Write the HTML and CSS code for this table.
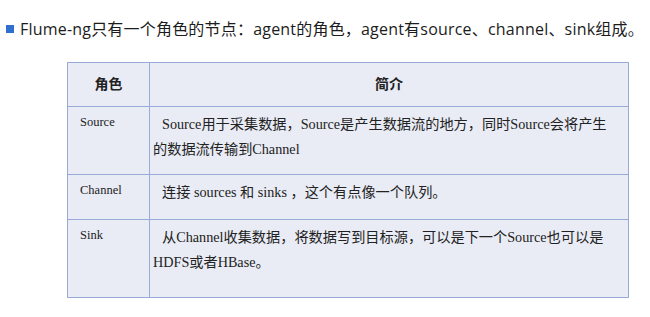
FILE: index.html
```html
<!DOCTYPE html>
<html lang="zh-CN">
<head>
<meta charset="utf-8">
<title>Flume-ng</title>
<link rel="stylesheet" href="styles.css">
</head>
<body>
<div class="page">
  <p class="lead"><span class="bullet"></span>Flume-ng只有一个角色的节点：agent的角色，agent有source、channel、sink组成。</p>
  <table class="roles">
    <thead>
      <tr class="head-row">
        <th class="col-role">角色</th>
        <th class="col-desc">简介</th>
      </tr>
    </thead>
    <tbody>
      <tr class="row-source">
        <td class="name">Source</td>
        <td class="desc"><span class="indent"></span>Source用于采集数据，Source是产生数据流的地方，同时Source会将产生<br>的数据流传输到Channel</td>
      </tr>
      <tr class="row-channel">
        <td class="name">Channel</td>
        <td class="desc"><span class="indent"></span>连接 sources 和 sinks ，这个有点像一个队列。</td>
      </tr>
      <tr class="row-sink">
        <td class="name">Sink</td>
        <td class="desc"><span class="indent"></span>从Channel收集数据，将数据写到目标源，可以是下一个Source也可以是<br>HDFS或者HBase。</td>
      </tr>
    </tbody>
  </table>
</div>
</body>
</html>
```

FILE: styles.css
```css
html, body {
  margin: 0;
  padding: 0;
  background: #ffffff;
}

.page {
  width: 650px;
  height: 317px;
  padding-top: 18px;
  box-sizing: border-box;
}

.lead {
  margin: 0;
  display: flex;
  align-items: center;
  padding-left: 6px;
  font-family: "Open Sans", "Noto Sans CJK SC", sans-serif;
  font-size: 16px;
  line-height: 22px;
  color: #1c1c1c;
  letter-spacing: 0.2px;
}

.bullet {
  width: 8px;
  height: 8px;
  background: #2f6fd0;
  margin-right: 6px;
  flex: none;
}

.roles {
  margin: 22px 0 0 67px;
  width: 562px;
  border-collapse: collapse;
  background: #e9ecf5;
  font-family: "Liberation Serif", "Noto Sans CJK SC", serif;
  color: #222222;
  table-layout: fixed;
}

.roles th,
.roles td {
  border: 1.5px solid #98aad8;
  padding: 0;
}

.roles .col-role { width: 81px; }

.roles .head-row th {
  height: 40px;
  font-family: "Noto Sans CJK SC", sans-serif;
  font-size: 14px;
  font-weight: bold;
  text-align: center;
  vertical-align: middle;
  padding-bottom: 3px;
}

.roles .name {
  vertical-align: top;
  font-size: 12.5px;
  line-height: 24px;
  padding-left: 12px;
  padding-top: 3px;
}

.roles .desc {
  vertical-align: top;
  font-size: 14.2px;
  line-height: 25px;
  padding-left: 3px;
  padding-top: 5px;
}

.indent {
  display: inline-block;
  width: 9px;
}

.roles .row-source td { height: 62px; }
.roles .row-channel td { height: 39px; }
.roles .row-sink td { height: 72px; }
```
